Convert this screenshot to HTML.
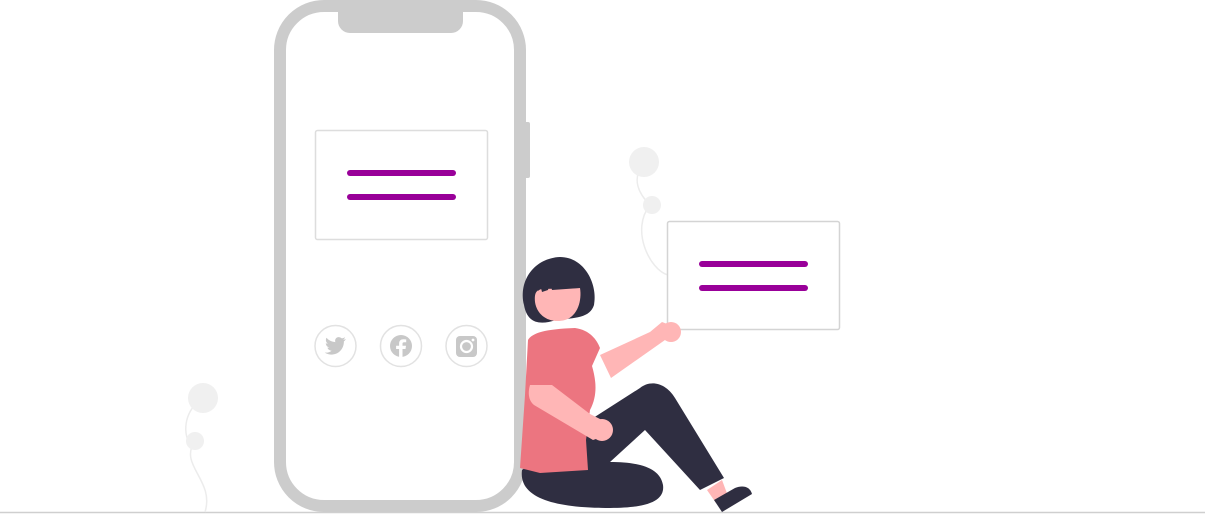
<!DOCTYPE html>
<html><head><meta charset="utf-8"><style>html,body{margin:0;padding:0;background:#fff;width:1205px;height:515px;overflow:hidden}</style></head>
<body>
<svg width="1205" height="515" viewBox="0 0 1205 515" xmlns="http://www.w3.org/2000/svg">
<line x1="0" y1="512.5" x2="1205" y2="512.5" stroke="#cfcfcf" stroke-width="1.5"/>
<!-- deco left -->
<path d="M195 441 C178 465, 215 480, 205 512" fill="none" stroke="#ececec" stroke-width="1.5"/>
<path d="M203 398 C185 410, 182 430, 190 445" fill="none" stroke="#ececec" stroke-width="1.5"/>
<circle cx="203" cy="398" r="15" fill="#f0f0f0"/>
<circle cx="195" cy="441" r="9" fill="#f0f0f0"/>
<!-- deco right -->
<path d="M644 162 C630 180, 640 195, 650 205 C630 230, 650 270, 668 275" fill="none" stroke="#ececec" stroke-width="1.5"/>
<circle cx="644" cy="162" r="15" fill="#f0f0f0"/>
<circle cx="652" cy="205" r="9" fill="#f0f0f0"/>
<!-- phone -->
<rect x="522" y="122" width="8" height="56" rx="2" fill="#cccccc"/>
<rect x="280" y="6" width="240" height="500" rx="44" fill="#fff" stroke="#cccccc" stroke-width="12"/>
<rect x="338" y="0" width="125" height="33" rx="12" fill="#cccccc"/>
<rect x="315.5" y="130.5" width="172" height="109" rx="2" fill="#fff" stroke="#dddddd" stroke-width="1.5"/>
<line x1="350" y1="173" x2="453" y2="173" stroke="#990099" stroke-width="6" stroke-linecap="round"/>
<line x1="350" y1="197" x2="453" y2="197" stroke="#990099" stroke-width="6" stroke-linecap="round"/>
<!-- social -->
<g fill="none" stroke="#e2e2e2" stroke-width="1.5">
<circle cx="335.5" cy="346" r="20.5"/><circle cx="401" cy="346" r="20.5"/><circle cx="466.5" cy="346" r="20.5"/></g>
<path d="M346 339 c-1 .5-2 .7-3 .8 1-.6 1.7-1.6 2-2.6-1 .6-2 1-3.2 1.2-2-2-5.7-1.7-6.6 1.5-.2.8 0 1.5.1 2.2-3.7-.2-6.7-1.8-8.8-4.3-1.2 2-.6 4.6 1.4 5.9-.7 0-1.5-.2-2.1-.6 0 2.1 1.6 4 3.6 4.4-.7.2-1.4.2-2 .1.6 1.8 2.3 3 4.2 3.1-2 1.5-4.4 2.2-6.9 1.9 8.8 5.3 19.3-.6 19.2-11.2 1-.6 1.6-1.5 2.1-2.4z" fill="#c8c8c8"/>
<circle cx="401" cy="346" r="11" fill="#c8c8c8"/>
<path d="M402.5 357 v-8 h3 l.5-3.2 h-3.5 v-2 c0-1 .4-1.6 1.7-1.6 h2 v-2.8 c-.4 0-1.5-.2-2.8-.2 -2.7 0-4.3 1.5-4.3 4.4 v2.2 h-3 v3.2 h3 v8 z" fill="#fff"/>
<rect x="456" y="336" width="21" height="21" rx="4" fill="#c8c8c8"/>
<circle cx="466.5" cy="346.5" r="5.5" fill="none" stroke="#fff" stroke-width="2.2"/>
<circle cx="473" cy="340" r="1.4" fill="#fff"/>
<!-- card 2 -->
<rect x="667.5" y="221.5" width="172" height="108" rx="2" fill="#fff" stroke="#d4d4d4" stroke-width="1.5"/>
<line x1="702" y1="264" x2="805" y2="264" stroke="#990099" stroke-width="6" stroke-linecap="round"/>
<line x1="702" y1="288" x2="805" y2="288" stroke="#990099" stroke-width="6" stroke-linecap="round"/>
<!-- person -->
<path d="M522 470 C518 500, 560 508, 610 508 C650 508, 665 500, 663 485 C660 468, 640 462, 610 462 L645 430 L700 490 L724 478 L675 398 C665 382, 650 380, 640 388 L590 420 L560 440 Z" fill="#2f2e41"/>
<path d="M707 490 L716 503 L728 496 L722 480 Z" fill="#ffb6b6"/>
<path d="M714 500 L722 512 L752 494 C750 486, 742 485, 735 488 Z" fill="#2f2e41"/>
<path d="M600 355 L611 378 L665 340 L670 325 L662 322 L650 332 Z" fill="#ffb6b6"/>
<circle cx="671" cy="332" r="10" fill="#ffb6b6"/>
<path d="M528 340 C532 333, 545 329, 575 328 C590 330, 597 340, 600 348 L592 366 C596 380, 598 395, 590 410 L586 440 L588 470 L540 473 L520 468 L525 395 Z" fill="#ec7580"/>
<path d="M530 385 L552 385 L590 414 L602 420 L605 436 L593 440 L534 405 C528 400, 528 392, 530 385 Z" fill="#ffb6b6"/>
<circle cx="602" cy="430" r="11" fill="#ffb6b6"/>
<path d="M524 305 C518 280, 535 258, 560 257 C585 257, 598 285, 594 305 C590 318, 575 318, 556 320 C538 326, 527 322, 524 305 Z" fill="#2f2e41"/>
<path d="M535 302 C534 292, 537 290, 542 289 L580 288 C582 300, 578 316, 565 320 C550 324, 537 316, 535 302 Z" fill="#ffb6b6"/>
<path d="M538 291 L540 284 L542 292 L548 290 L550 282 L552 290 L580 288 L578 282 L548 283 Z" fill="#2f2e41"/>
</svg>
</body></html>
